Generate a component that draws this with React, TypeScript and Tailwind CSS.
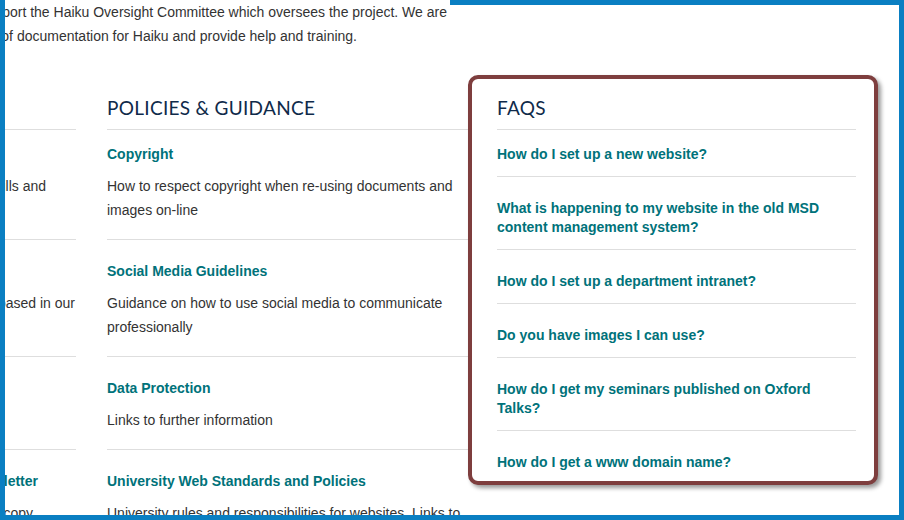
import React from 'react';

type Row = {
  title: string;
  desc: string[];
  left: { title?: { text: string; pr: string }; lines: { text: string; pr: string }[] };
};

const rows: Row[] = [
  {
    title: 'Copyright',
    desc: ['How to respect copyright when re-using documents and', 'images on-line'],
    left: { lines: [{ text: 'Training to improve your web skills and', pr: 'pr-[30px]' }, { text: '', pr: '' }] },
  },
  {
    title: 'Social Media Guidelines',
    desc: ['Guidance on how to use social media to communicate', 'professionally'],
    left: { lines: [{ text: 'Email newsletters can be based in our', pr: 'pr-[1px]' }, { text: '', pr: '' }] },
  },
  {
    title: 'Data Protection',
    desc: ['Links to further information'],
    left: { lines: [{ text: '', pr: '' }] },
  },
  {
    title: 'University Web Standards and Policies',
    desc: ['University rules and responsibilities for websites. Links to'],
    left: {
      title: { text: 'Department Newsletter', pr: 'pr-[38px]' },
      lines: [{ text: 'Templates you can copy', pr: 'pr-[43px]' }],
    },
  },
];

const faqs = [
  'How do I set up a new website?',
  'What is happening to my website in the old MSD content management system?',
  'How do I set up a department intranet?',
  'Do you have images I can use?',
  'How do I get my seminars published on Oxford Talks?',
  'How do I get a www domain name?',
];

const sans = "font-['Liberation_Sans',Arial,sans-serif]";
const heading = "font-['Lato','Noto_Sans',sans-serif] text-[19px] leading-[24px] tracking-[0.3px] text-[#0f2a4a]";

function ClipLine({ text, pr, className }: { text: string; pr: string; className: string }) {
  return (
    <div className={`flex justify-end overflow-hidden whitespace-nowrap ${pr} ${className}`}>
      <span className="shrink-0">{text || '\u00a0'}</span>
    </div>
  );
}

export default function App() {
  return (
    <div className={`relative w-[904px] h-[520px] overflow-hidden bg-white border-x-[5px] border-b-[5px] border-[#0a7fc2] ${sans}`}>
      <div className="absolute top-0 right-0 h-[5px] w-[449px] bg-[#0a7fc2]" />

      {/* intro paragraph, clipped at left */}
      <div className="text-[14px] leading-[24px] text-[#333]">
        <ClipLine
          className="w-[442px]"
          pr=""
          text="The team also support the Haiku Oversight Committee which oversees the project. We are"
        />
        <ClipLine
          className="w-[352px]"
          pr=""
          text="responsible for the production of documentation for Haiku and provide help and training."
        />
      </div>

      <div className="mt-[27px] flex items-start">
        {/* policies grid */}
        <div className="grid grid-cols-[71px_361px] gap-x-[31px]">
          <div className="pt-[21px] pb-[9px] border-b border-[#dedede]" />
          <div className="pt-[21px] pb-[9px] border-b border-[#dedede]">
            <h2 className={heading}>POLICIES &amp; GUIDANCE</h2>
          </div>

          {rows.map((r, i) => (
            <React.Fragment key={r.title}>
              <div className={`${i === 0 ? 'pt-[14px]' : 'pt-[21px]'} pb-[17px] border-b border-[#dedede] overflow-hidden`}>
                {r.left.title ? (
                  <ClipLine
                    className="h-[20px] leading-[20px] text-[14px] font-bold text-[#00727a]"
                    pr={r.left.title.pr}
                    text={r.left.title.text}
                  />
                ) : (
                  <div className="h-[20px]" />
                )}
                <div className="mt-[10px] text-[14px] leading-[24px] text-[#333]">
                  {r.left.lines.map((l, j) => (
                    <ClipLine key={j} className="" pr={l.pr} text={l.text} />
                  ))}
                </div>
              </div>
              <div className={`${i === 0 ? 'pt-[14px]' : 'pt-[21px]'} pb-[17px] border-b border-[#dedede]`}>
                <a className="block h-[20px] leading-[20px] text-[14px] font-bold text-[#00727a]">{r.title}</a>
                <p className="mt-[10px] text-[14px] leading-[24px] text-[#333]">
                  {r.desc.map((d, j) => (
                    <span key={j} className="block whitespace-nowrap">{d}</span>
                  ))}
                </p>
              </div>
            </React.Fragment>
          ))}
        </div>

        {/* FAQ box */}
        <div className="w-[410px] rounded-[10px] border-4 border-[#7e3e3e] bg-white pl-[25px] pr-[18px] pt-[17px] pb-[9px] shadow-[3px_3px_4px_rgba(0,0,0,0.4)]">
          <h2 className={`${heading} pb-[9px] border-b border-[#dedede]`}>FAQS</h2>
          <ul>
            {faqs.map((q, i) => (
              <li
                key={q}
                className={`${i === 0 ? 'pt-[15px]' : 'pt-[22px]'} ${i === faqs.length - 1 ? 'pb-0' : 'pb-[12px] border-b border-[#dedede]'}`}
              >
                <a className="block text-[14px] leading-[19px] font-bold text-[#00727a]">{q}</a>
              </li>
            ))}
          </ul>
        </div>
      </div>
    </div>
  );
}
